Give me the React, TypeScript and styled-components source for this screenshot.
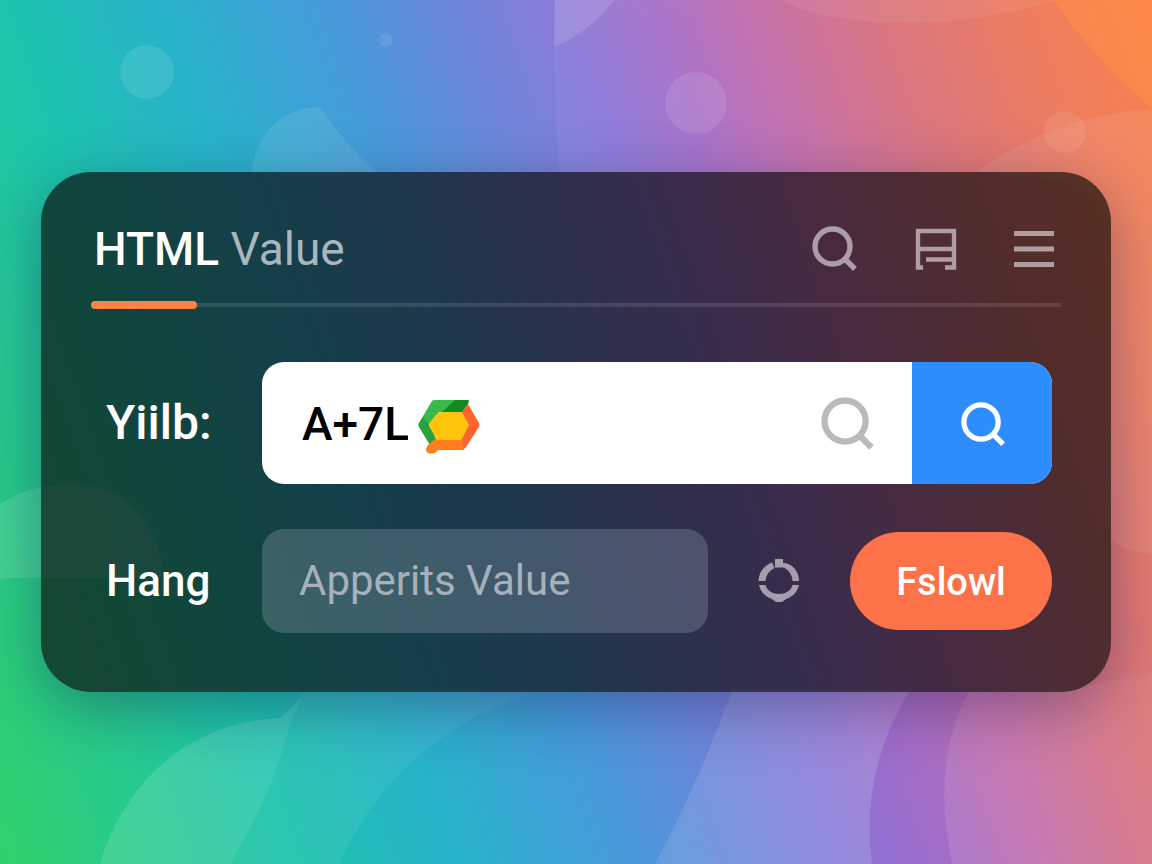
import React from 'react';
import styled, { createGlobalStyle } from 'styled-components';

const GlobalStyle = createGlobalStyle`
  *, *::before, *::after { box-sizing: border-box; }
  body { margin: 0; font-family: Roboto, "Liberation Sans", sans-serif; }
`;

const Page = styled.main`
  position: relative;
  isolation: isolate;
  min-height: 100vh;
  display: flex;
  align-items: center;
  justify-content: center;
  padding: 32px 41px;
  overflow: hidden;
  background: linear-gradient(71deg, #30d16b 0%, #1dc3ae 21%, #28b2cb 32%, #4a98db 44%, #6a88da 51%, #8a7ad8 59%, #a674cc 65%, #c472ae 72%, #d97680 81%, #ec7c62 90%, #f8824a 100%);
`;

const Backdrop = styled.svg`
  position: absolute;
  inset: 0;
  z-index: -1;
  width: 100%;
  height: 100%;
`;

const Card = styled.section`
  width: 100%;
  max-width: 1240px;
  padding: 48px 50px 59px;
  border-radius: 50px;
  background: rgba(10, 8, 8, 0.67);
  box-shadow: 0 16px 60px rgba(20, 20, 60, 0.36);
`;

const Header = styled.header`
  display: flex;
  align-items: center;
  justify-content: space-between;
  height: 58px;
  padding: 0 7px 0 3px;
`;

const Title = styled.h1`
  margin: 0;
  font-size: 46px;
  line-height: 56px;
  font-weight: 500;
  color: #fff;
`;

const TitleLight = styled.span`
  font-weight: 400;
  color: #a9b6bf;
`;

const Tools = styled.nav`
  display: flex;
  align-items: center;
  gap: 56px;
`;

const IconButton = styled.button`
  display: flex;
  padding: 0;
  border: 0;
  background: none;
  color: rgba(235, 228, 232, 0.62);
  cursor: pointer;
`;

const Track = styled.div`
  display: flex;
  align-items: center;
  height: 8px;
  margin-top: 23px;
  background: linear-gradient(rgba(255, 255, 255, 0.11), rgba(255, 255, 255, 0.11)) center / 100% 4px no-repeat;
`;

const TrackFill = styled.div`
  width: 106px;
  height: 8px;
  border-radius: 4px;
  background: #fb8240;
`;

const Form = styled.form`
  display: grid;
  grid-template-columns: 156px minmax(0, 1fr);
  align-items: center;
  row-gap: 45px;
  margin-top: 53px;
  padding: 0 9px 0 15px;
`;

const Label = styled.label<{ $large?: boolean }>`
  font-size: ${(p) => (p.$large ? 48 : 44)}px;
  line-height: 52px;
  font-weight: 500;
  color: #fff;
`;

const SearchBox = styled.div`
  display: flex;
  height: 122px;
  border-radius: 22px;
  overflow: hidden;
  background: #fff;
`;

const SearchField = styled.div`
  flex: 1;
  min-width: 0;
  display: flex;
  align-items: center;
  padding: 2px 37px 0 40px;
  color: #b9babb;
`;

const SearchInput = styled.input`
  width: 106px;
  padding: 0;
  border: 0;
  outline: 0;
  background: none;
  font: 500 46px/56px Roboto, "Liberation Sans", sans-serif;
  color: #000;
`;

const Logo = styled.svg`
  margin: 6px auto 0 10px;
`;

const SearchSubmit = styled.button`
  width: 140px;
  display: flex;
  align-items: center;
  justify-content: center;
  padding: 2px 0 0 2px;
  border: 0;
  background: #2d8dfe;
  color: #fff;
  cursor: pointer;
`;

const ValueRow = styled.div`
  display: flex;
  align-items: center;
`;

const ValueInput = styled.input`
  flex: 1;
  min-width: 0;
  height: 104px;
  padding: 0 37px 2px;
  border: 0;
  border-radius: 22px;
  outline: 0;
  background: rgba(160, 175, 190, 0.28);
  font: 400 42px/52px Roboto, "Liberation Sans", sans-serif;
  color: #fff;
  &::placeholder { color: #a6b1bc; opacity: 1; }
`;

const RefreshButton = styled(IconButton)`
  margin: 0 50px;
`;

const SubmitButton = styled.button`
  width: 202px;
  height: 98px;
  padding: 2px 0 0;
  border: 0;
  border-radius: 49px;
  background: #fd7248;
  font: 500 38px/50px Roboto, "Liberation Sans", sans-serif;
  color: #fff;
  cursor: pointer;
`;

const SearchIcon = ({ size }: { size: number }) => (
  <svg width={size} height={size} viewBox="0 0 46 46" fill="none" stroke="currentColor" strokeWidth="5.400" aria-hidden="true">
    <path d="M20.500 3a17.500 17.500 0 1 1 0 35a17.500 17.500 0 1 1 0-35ZM32 32 43 43" />
  </svg>
);

const BoardIcon = () => (
  <svg width="44" height="44" viewBox="0 0 44 44" fill="none" stroke="currentColor" strokeWidth="4.400" aria-hidden="true">
    <path d="M9 40.500H4V4H40V40.500H31M4 22H40M12 32.500H38" />
  </svg>
);

const MenuIcon = () => (
  <svg width="40" height="38" viewBox="0 0 40 38" fill="none" stroke="currentColor" strokeWidth="5" aria-hidden="true">
    <path d="M0 3.500H40M0 19H40M0 34.500H40" />
  </svg>
);

const RefreshIcon = () => (
  <svg width="42" height="44" viewBox="0 0 42 44" fill="currentColor" aria-hidden="true">
    <path d="M17 0H25V4C34 4 41 12 41 22H34.500Q34 13 26 8.500H17Z" />
    <path d="M14 3.500 16.500 9Q8 13 7.500 22H0.500Q1 9 14 3.500Z" />
    <path d="M1 26H7.500C9 32 15 35 21 35S33 32 34.500 26H41C39 34 34 38 28 40L24 43H18L14 40C8 38 3 34 1 26Z" />
  </svg>
);

export default function App() {
  return (
    <>
      <GlobalStyle />
      <Page>
        <Backdrop viewBox="0 0 1152 864" preserveAspectRatio="none" aria-hidden="true">
          <defs>
            <linearGradient id="fade" x1="0" x2="1">
              <stop offset="0" stopColor="#fff" stopOpacity="0.05" />
              <stop offset="1" stopColor="#fff" stopOpacity="0" />
            </linearGradient>
          </defs>
          <g fill="#fff">
            <circle cx="147" cy="72" r="27" fillOpacity="0.1" />
            <circle cx="386" cy="40" r="7" fillOpacity="0.09" />
            <circle cx="696" cy="103" r="31" fillOpacity="0.1" />
            <circle cx="1065" cy="132" r="21" fillOpacity="0.08" />
            <path d="M252 173C254 138 278 108 320 107Q345 145 378 173Z" fillOpacity="0.09" />
            <path d="M555 0H614Q590 32 554 47Z" fillOpacity="0.12" />
            <path d="M554 0H700V173H559Q555 110 554 47Z" fill="url(#fade)" />
            <path d="M780 0H1056Q960 30 860 21Q810 15 780 0Z" fillOpacity="0.06" />
            <path d="M975 173Q1055 115 1152 109V555Q1125 550 1111 540V230Q1105 190 1060 180Z" fillOpacity="0.07" />
            <path d="M0 504Q30 484 75 484A87 90 0 0 1 162 578H42Q20 577 0 579Z" fillOpacity="0.12" />
            <path d="M100 864C125 780 190 722 280 718Q300 700 305 690L292 718Q275 790 230 864Z" fillOpacity="0.13" />
            <path d="M305 690H540C440 720 370 790 340 864H230Q275 790 292 718Z" fillOpacity="0.06" />
            <path d="M732 690H910Q860 770 872 864H655Q700 780 732 690Z" fillOpacity="0.11" />
            <path d="M1152 675Q1130 675 1090 686L970 690Q930 760 952 864H1152Z" fillOpacity="0.05" />
          </g>
          <path d="M1053 0H1152V108Q1095 60 1053 0Z" fill="#ff9048" fillOpacity="0.5" />
          <path d="M910 690H970Q930 760 952 864H872Q860 770 910 690Z" fill="#8040c0" fillOpacity="0.12" />
        </Backdrop>
        <Card>
          <Header>
            <Title>HTML <TitleLight>Value</TitleLight></Title>
            <Tools aria-label="Tools">
              <IconButton type="button" aria-label="Search"><SearchIcon size={46} /></IconButton>
              <IconButton type="button" aria-label="Board"><BoardIcon /></IconButton>
              <IconButton type="button" aria-label="Menu"><MenuIcon /></IconButton>
            </Tools>
          </Header>
          <Track><TrackFill /></Track>
          <Form onSubmit={(e) => e.preventDefault()}>
            <Label htmlFor="query" $large>Yiilb:</Label>
            <SearchBox>
              <SearchField>
                <SearchInput id="query" type="text" defaultValue="A+7L" />
                <Logo width="62" height="54" viewBox="0 0 62 54" aria-hidden="true">
                  <path d="M14 1Q15 0 17 0H51L45 12H21L12 25 19 42 14 48 1 27Q0 25 1 23Z" fill="#38b94c" />
                  <path d="M37 0H49Q52 0 50 4L44 12H24Z" fill="#128a20" />
                  <path d="M5 17 12 25 19 42 14 48 1 27Q0 25 1 23Z" fill="#2ba043" />
                  <path d="M50 4 61 23Q62 25 61 27L48 47Q46 50 43 50H36L44 38 50 25 43 13Z" fill="#ff6430" />
                  <path d="M17 39H44L46 50H20Q16 55 10 53 6 50 10 45Z" fill="#ff7d1c" />
                  <path d="M23 12H42Q44 12 45 14L51 25 44 39Q43 40 41 40H19L11 26Q10 24 12 22L19 14Q21 12 23 12Z" fill="#ffc50a" />
                </Logo>
                <SearchIcon size={54} />
              </SearchField>
              <SearchSubmit type="submit" aria-label="Run search"><SearchIcon size={45} /></SearchSubmit>
            </SearchBox>
            <Label htmlFor="value">Hang</Label>
            <ValueRow>
              <ValueInput id="value" type="text" placeholder="Apperits Value" />
              <RefreshButton type="button" aria-label="Refresh"><RefreshIcon /></RefreshButton>
              <SubmitButton type="submit">Fslowl</SubmitButton>
            </ValueRow>
          </Form>
        </Card>
      </Page>
    </>
  );
}
